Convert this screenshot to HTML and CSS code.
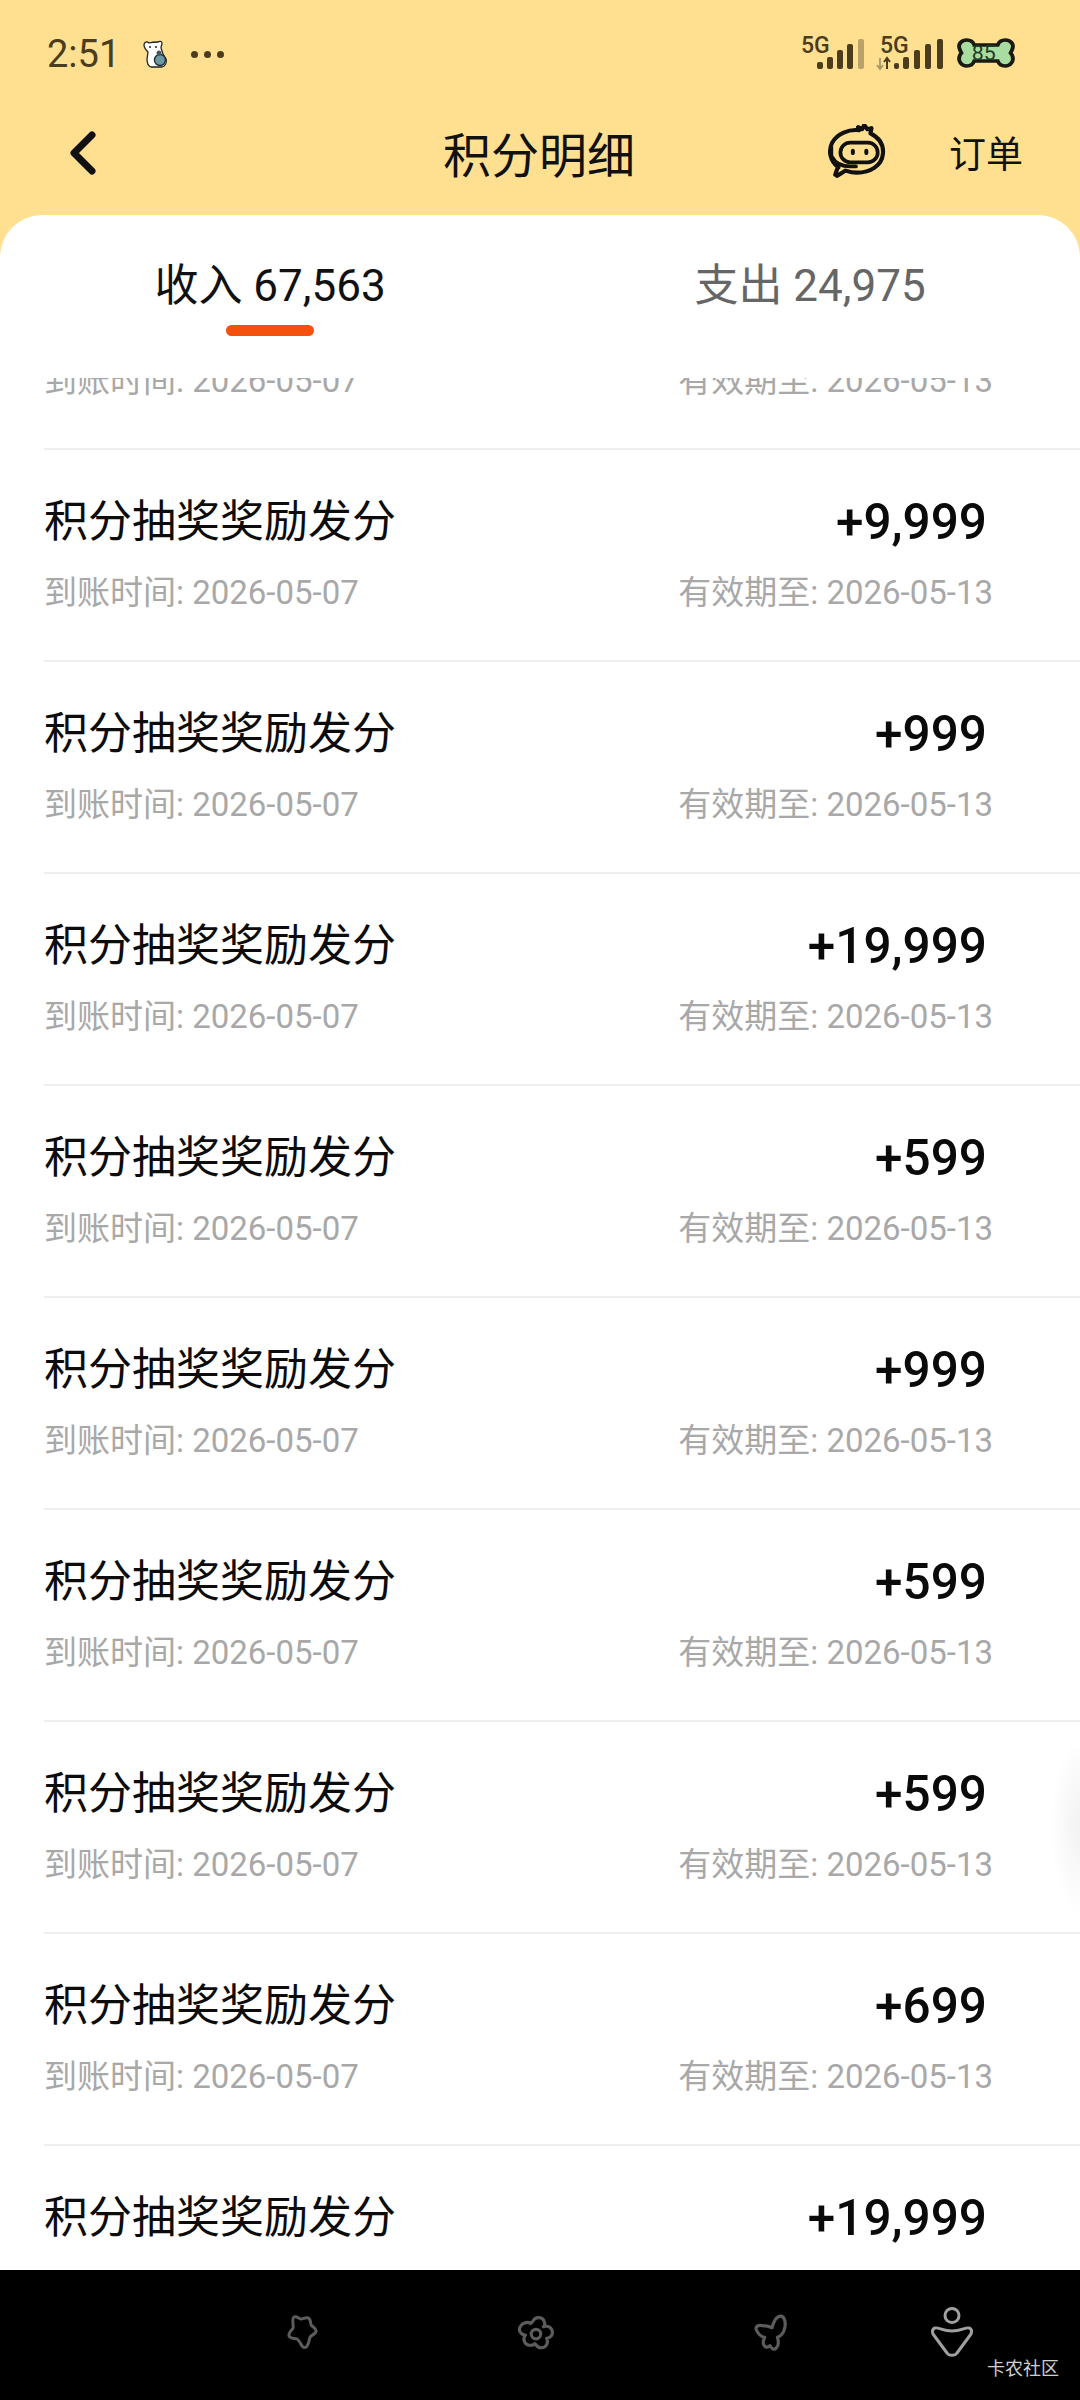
FILE: index.html
```html
<!DOCTYPE html>
<html lang="zh-CN">
<head>
<meta charset="utf-8">
<title>积分明细</title>
<link rel="stylesheet" href="styles.css">
</head>
<body>
<div class="screen">
  <header class="top">
    <div class="status">
      <div class="status-left">
        <span class="clock">2:51</span>
        <svg class="bear" viewBox="0 0 24 28"><path d="M1 5c0-3 3-4 5-2 3-1 6-1 9-1 1-1 4-1 4 1 0 2-1 3-1 5l2 6 3 5c1 4-1 7-4 8H8c-3-1-4-4-4-8l1-7C3 10 1 8 1 5z" fill="#fff" stroke="#222" stroke-width="1.300"/><circle cx="17" cy="20" r="5.500" fill="#6c98a3" stroke="#1f2f33" stroke-width="1.400"/><circle cx="16" cy="13" r="2.500" fill="#44585c"/><circle cx="7" cy="7" r="1" fill="#222"/><circle cx="13" cy="7" r="1" fill="#222"/></svg>
        <span class="dots"><i></i><i></i><i></i></span>
      </div>
      <div class="status-right">
        <svg class="sig sig-a" viewBox="0 0 64 32"><text x="0" y="16" class="fiveg">5G</text><rect x="16" y="25" width="6" height="7" rx="2" fill="#4a3c1c"/><rect x="26" y="20" width="6" height="12" rx="2" fill="#4a3c1c"/><rect x="36" y="13" width="6" height="19" rx="2" fill="#4a3c1c"/><rect x="46" y="7" width="6" height="25" rx="2" fill="#4a3c1c"/><rect x="57" y="2" width="6" height="30" rx="2" fill="#b8a26a"/></svg>
        <svg class="sig sig-b" viewBox="0 0 66 32"><text x="3" y="16" class="fiveg">5G</text><path d="M3 21v11M0 28l3 4 3-4" stroke="#a8976a" stroke-width="1.800" fill="none"/><path d="M10 32V21M7 25l3-4 3 4" stroke="#4a3c1c" stroke-width="2" fill="none"/><rect x="17" y="26" width="5" height="6" rx="2" fill="#4a3c1c"/><rect x="26" y="20" width="6" height="12" rx="2" fill="#4a3c1c"/><rect x="37" y="13" width="6" height="19" rx="2" fill="#4a3c1c"/><rect x="48" y="7" width="6" height="25" rx="2" fill="#4a3c1c"/><rect x="60" y="2" width="6" height="30" rx="2" fill="#4a3c1c"/></svg>
        <svg class="bone" viewBox="0 0 58 32" preserveAspectRatio="none"><path d="M11 3c4 0 6 2 7 5h22c1-3 3-5 7-5 5 0 8 4 7 8-.4 1.500-1 3-2 5 1 1 1.600 2.500 2 4 1 4-2 9-7 9-4 0-6-2-7-5H18c-1 3-3 5-7 5-5 0-8-5-7-9 .4-1.500 1-3 2-4-1-2-1.600-3.500-2-5-1-4 2-8 7-8z" fill="#a9dca0" stroke="#1a1a10" stroke-width="3.600"/><text x="27" y="23" class="bone-num">85</text></svg>
      </div>
    </div>
    <nav class="bar">
      <svg class="back" viewBox="0 0 32 48"><path d="M25 6 7 24l18 18" fill="none" stroke="#111" stroke-width="7" stroke-linecap="round" stroke-linejoin="round"/></svg>
      <h1 class="title">积分明细</h1>
      <svg class="mascot" viewBox="0 0 60 56"><path d="M12 42C4 36 2 26 6 18 11 9 22 5 32 6l-1-3 4 2 2-4 3 4 4-1-1 5c8 4 13 11 12 20-1 11-12 18-25 18-4 0-8-1-11-2l-8 5-2-1 2-6" fill="none" stroke="#111" stroke-width="4" stroke-linejoin="round" stroke-linecap="round"/><rect x="14" y="18" width="36" height="19" rx="9.500" fill="none" stroke="#111" stroke-width="3.600"/><ellipse cx="26" cy="27" rx="2" ry="3" fill="#111"/><ellipse cx="39" cy="27" rx="2" ry="3" fill="#111"/><path d="M4 22c-2 3-2 7 0 10l3-1V22z" fill="#111"/><path d="M6 32c3 6 10 9 18 9h5" fill="none" stroke="#111" stroke-width="3.600" stroke-linecap="round"/></svg>
      <span class="orders">订单</span>
    </nav>
  </header>

  <main class="card">
    <div class="tabs">
      <div class="tab tab-on"><span>收入 67,563</span><span class="mark"></span></div>
      <div class="tab"><span>支出 24,975</span></div>
    </div>
    <div class="list">
      <div class="rows">
        <div class="row row-cut">
          <div class="line sub"><span>到账时间: 2026-05-07</span><span>有效期至: 2026-05-13</span></div>
        </div>
        <div class="row">
          <div class="line"><span class="name">积分抽奖奖励发分</span><span class="pts">+9,999</span></div>
          <div class="line sub"><span>到账时间: 2026-05-07</span><span>有效期至: 2026-05-13</span></div>
        </div>
        <div class="row">
          <div class="line"><span class="name">积分抽奖奖励发分</span><span class="pts">+999</span></div>
          <div class="line sub"><span>到账时间: 2026-05-07</span><span>有效期至: 2026-05-13</span></div>
        </div>
        <div class="row">
          <div class="line"><span class="name">积分抽奖奖励发分</span><span class="pts">+19,999</span></div>
          <div class="line sub"><span>到账时间: 2026-05-07</span><span>有效期至: 2026-05-13</span></div>
        </div>
        <div class="row">
          <div class="line"><span class="name">积分抽奖奖励发分</span><span class="pts">+599</span></div>
          <div class="line sub"><span>到账时间: 2026-05-07</span><span>有效期至: 2026-05-13</span></div>
        </div>
        <div class="row">
          <div class="line"><span class="name">积分抽奖奖励发分</span><span class="pts">+999</span></div>
          <div class="line sub"><span>到账时间: 2026-05-07</span><span>有效期至: 2026-05-13</span></div>
        </div>
        <div class="row">
          <div class="line"><span class="name">积分抽奖奖励发分</span><span class="pts">+599</span></div>
          <div class="line sub"><span>到账时间: 2026-05-07</span><span>有效期至: 2026-05-13</span></div>
        </div>
        <div class="row">
          <div class="line"><span class="name">积分抽奖奖励发分</span><span class="pts">+599</span></div>
          <div class="line sub"><span>到账时间: 2026-05-07</span><span>有效期至: 2026-05-13</span></div>
        </div>
        <div class="row">
          <div class="line"><span class="name">积分抽奖奖励发分</span><span class="pts">+699</span></div>
          <div class="line sub"><span>到账时间: 2026-05-07</span><span>有效期至: 2026-05-13</span></div>
        </div>
        <div class="row">
          <div class="line"><span class="name">积分抽奖奖励发分</span><span class="pts">+19,999</span></div>
        </div>
      </div>
      <div class="edge-shadow"></div>
    </div>
  </main>

  <footer class="dock">
    <svg class="ic" viewBox="0 0 36 36"><path d="M11 4c3-1 5 2 7 2s5-2 7-1c3 1 2 5 3 7s5 3 5 6-5 4-6 6-1 6-3 9c-1 2-4 2-5 0-2-3-3-6-5-7s-7 0-8-3c-1-3 3-6 4-8s-2-9 1-11z" fill="none" stroke="#5c5c5c" stroke-width="3" stroke-linejoin="round" transform="translate(1 -1) scale(.95)"/></svg>
    <svg class="ic" viewBox="0 0 36 36"><path d="M15 7c2-5 10-5 11 1 1 3-1 4-1 4s6-2 8 3c2 5-2 8-5 8 2 4 0 9-5 9-4 0-5-3-6-4-2 2-8 3-10-2-1-3 0-5 1-6-4 0-7-4-5-8s7-5 10-3c1-1 1-1 2-2z" fill="none" stroke="#5c5c5c" stroke-width="3" stroke-linejoin="round"/><circle cx="18" cy="19" r="4.500" fill="none" stroke="#5c5c5c" stroke-width="3"/></svg>
    <svg class="ic" viewBox="0 0 36 36"><path d="M20 13c1-5 4-11 8-11s5 6 4 11-4 8-7 9c1 3 2 7-1 10s-5 0-6-2c-2 2-5 2-6-1-1-2 0-5 1-7-3 0-6-3-8-7-1-3 2-5 5-4 4 0 8 1 10 2z" fill="none" stroke="#5c5c5c" stroke-width="3" stroke-linejoin="round"/></svg>
    <svg class="ic ic-me" viewBox="0 0 44 50"><circle cx="22" cy="8.500" r="7" fill="none" stroke="#a0a0a0" stroke-width="3"/><path d="M5 21c3-1 8 3 17 3s14-4 17-3c3 1 3 3 2 6L27 46c-2 3-8 3-10 0L3 27c-1-3-1-5 2-6z" fill="none" stroke="#a0a0a0" stroke-width="3" stroke-linejoin="round"/></svg>
    <span class="watermark">卡农社区</span>
  </footer>
</div>
</body>
</html>
```

FILE: styles.css
```css
* { box-sizing: border-box; }
html, body { margin: 0; padding: 0; }
body {
  width: 1080px;
  height: 2400px;
  overflow: hidden;
  font-family: Roboto, "Noto Sans CJK SC", sans-serif;
  background: #000;
}
.screen {
  width: 1080px;
  height: 2400px;
  display: flex;
  flex-direction: column;
  background: #ffdf90;
}

/* header */
.top { height: 215px; flex: none; }
.status {
  height: 108px;
  padding: 0 63px 0 47px;
  display: flex;
  justify-content: space-between;
  align-items: center;
}
.status-left { display: flex; align-items: center; }
.clock { font-size: 38px; color: #4a3c1c; line-height: 1; width: 96px; }
.bear { width: 24px; height: 28px; }
.dots { display: flex; gap: 6px; margin-left: 24px; }
.dots i { width: 7px; height: 7px; border-radius: 50%; background: #4a3c1c; }
.status-right { display: flex; align-items: center; margin-top: -2px; }
.sig { height: 32px; overflow: visible; }
.sig-a { width: 64px; }
.sig-b { width: 66px; margin-left: 12px; }
.fiveg { font: 500 23px Roboto, sans-serif; fill: #4a3c1c; }
.bone { width: 62px; height: 32px; margin-left: 12px; }
.bone-num { font: 400 20px Roboto, sans-serif; fill: #1f3a24; text-anchor: middle; }
.bar {
  height: 90px;
  position: relative;
  display: flex;
  align-items: center;
  padding-left: 67px;
}
.back { width: 32px; height: 48px; flex: none; }
.title {
  margin: 0;
  width: 192px;
  margin-left: 344px;
  font-size: 48px;
  font-weight: 400;
  color: #111;
  white-space: nowrap;
  font-family: "Noto Sans CJK SC", sans-serif;
  line-height: 1.2;
}
.mascot { width: 64px; height: 58px; margin-left: 190px; flex: none; }
.orders {
  margin-left: 60px;
  margin-top: -2px;
  font-size: 37px;
  color: #111;
  font-family: "Noto Sans CJK SC", sans-serif;
}

/* card */
.card {
  flex: 1;
  min-height: 0;
  background: #fff;
  border-radius: 42px 42px 0 0;
  display: flex;
  flex-direction: column;
}
.tabs {
  height: 163px;
  flex: none;
  display: grid;
  grid-template-columns: 540px 540px;
  padding-top: 43px;
}
.tab {
  position: relative;
  text-align: center;
  font-size: 44px;
  line-height: 56px;
  color: #666;
  font-family: Roboto, "Noto Sans CJK SC", sans-serif;
}
.tab-on { color: #111; }
.mark {
  position: absolute;
  left: 226px;
  top: 67px;
  width: 88px;
  height: 11px;
  border-radius: 6px;
  background: #f4500e;
}

/* list */
.list {
  flex: 1;
  min-height: 0;
  overflow: hidden;
  position: relative;
}
.rows { margin-top: -21px; }
.row {
  height: 212px;
  margin-left: 44px;
  padding: 32px 87px 0 0;
  border-bottom: 2px solid #eeeeee;
  display: flex;
  flex-direction: column;
}
.row-cut { height: 93px; padding-top: 0; }
.row-cut .sub { margin-top: 0; }
.line {
  display: flex;
  justify-content: space-between;
  align-items: center;
}
.name {
  font-size: 44px;
  line-height: 64px;
  color: #0c0c0c;
  font-family: "Noto Sans CJK SC", sans-serif;
}
.pts {
  margin-right: 6px;
  margin-top: 8px;
  font-size: 49.500px;
  font-weight: 500;
  line-height: 64px;
  color: #0a0a0a;
}
.sub {
  margin-top: 15px;
  font-size: 33px;
  line-height: 48px;
  color: #a8a8a8;
}
.edge-shadow {
  position: absolute;
  right: 0;
  top: 1358px;
  width: 30px;
  height: 180px;
  background: radial-gradient(ellipse at right center, rgba(0,0,0,.05), rgba(0,0,0,0) 70%);
}

/* bottom bar */
.dock {
  height: 130px;
  flex: none;
  background: #000;
  position: relative;
}
.ic { position: absolute; width: 38px; height: 38px; top: 44px; }
.ic:nth-child(1) { left: 282px; }
.ic:nth-child(2) { left: 517px; }
.ic:nth-child(3) { left: 751px; }
.ic-me { width: 44px; height: 50px; left: 930px !important; top: 37px; }
.watermark {
  position: absolute;
  left: 987px;
  top: 84px;
  font-size: 18px;
  line-height: 26px;
  color: #cfcfcf;
  font-family: "Noto Sans CJK SC", sans-serif;
}
```
